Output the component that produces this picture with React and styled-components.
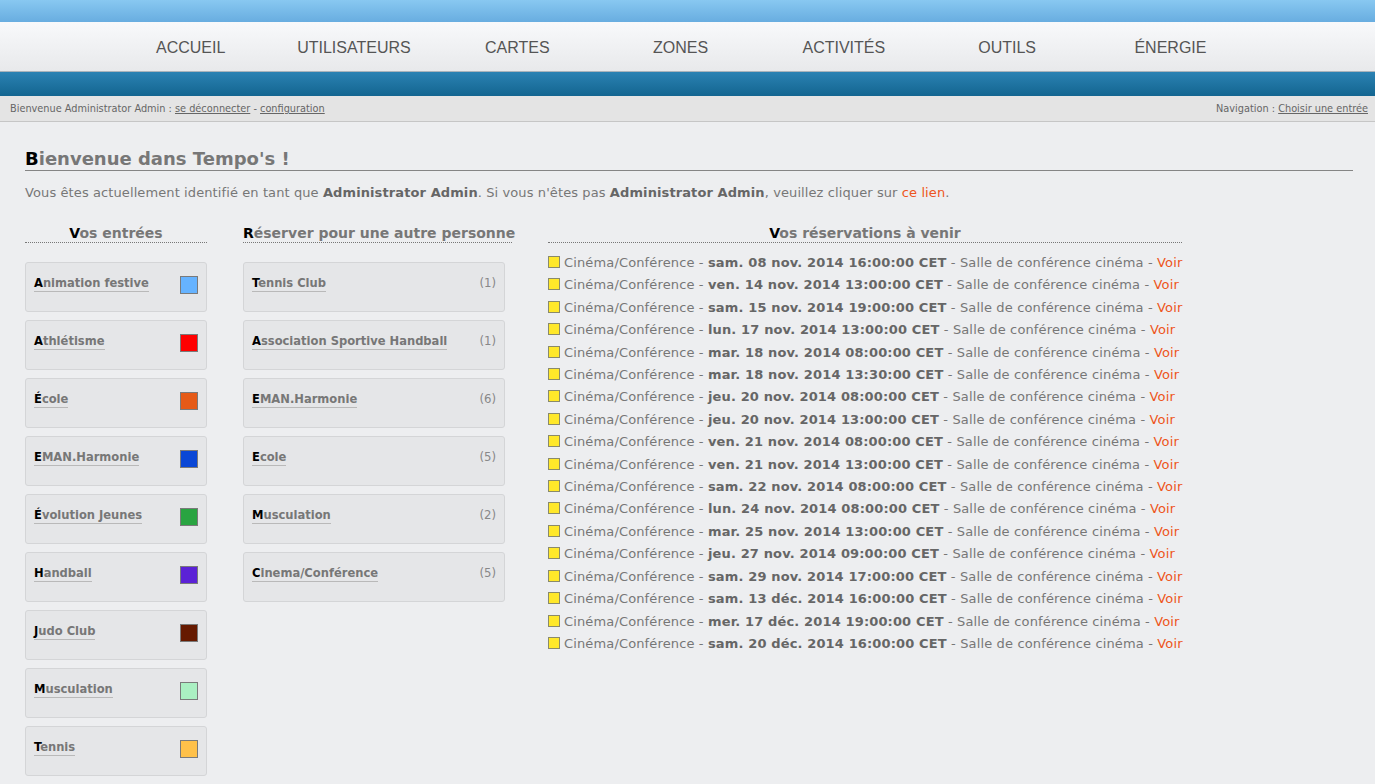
import React from "react";
import styled, { createGlobalStyle } from "styled-components";

const GlobalStyle = createGlobalStyle`
  html, body { margin: 0; padding: 0; }
  body {
    background: #edeef0;
    font-family: "DejaVu Sans", Verdana, sans-serif;
    color: #777;
  }
`;

const TopStrip = styled.div`
  height: 22px;
  background: linear-gradient(#88c8f1, #68ade0);
`;

const NavBar = styled.nav`
  height: 49px;
  background: linear-gradient(#f8f9fb, #e8e9eb);
  border-bottom: 1px solid #a9b3bb;
  display: flex;
  padding-left: 109px;
`;

const NavItem = styled.a`
  width: 163.3px;
  flex: none;
  display: flex;
  align-items: center;
  justify-content: center;
  padding-top: 2px;
  font-family: "Liberation Sans", Arial, sans-serif;
  font-size: 16px;
  color: #555;
  text-decoration: none;
`;

const BlueBar = styled.div`
  height: 24px;
  background: linear-gradient(#2b82b3, #136590);
`;

const InfoBar = styled.div`
  height: 25px;
  background: #e4e4e4;
  border-bottom: 1px solid #c6c6c6;
  display: flex;
  align-items: center;
  justify-content: space-between;
  padding: 0 7px 0 10px;
  font-family: "DejaVu Sans Condensed", "DejaVu Sans", sans-serif;
  font-size: 10.85px;
  color: #666;
`;

const SmallLink = styled.a`
  color: #666;
  text-decoration: underline;
`;

const Main = styled.main`
  padding: 25px 22px 20px 25px;
`;

const Title = styled.h1`
  margin: 0;
  font-size: 18px;
  font-weight: bold;
  color: #777;
  line-height: 23px;
  border-bottom: 1px solid #858585;
  &::first-letter { color: #000; }
`;

const Intro = styled.p`
  margin: 13px 0 0;
  font-size: 13px;
  letter-spacing: 0.1px;
  line-height: 18px;
  color: #777;
  b { color: #666; }
`;

const OrangeLink = styled.a`
  color: #ee5520;
  text-decoration: none;
`;

const Columns = styled.div`
  display: flex;
  gap: 36px;
  margin-top: 22px;
  align-items: flex-start;
`;

const Column = styled.section`
  width: ${(p) => p.$w}px;
  flex: none;
`;

const ColumnTitle = styled.h2`
  margin: 0;
  font-size: 14px;
  font-weight: bold;
  color: #777;
  text-align: center;
  white-space: nowrap;
  line-height: 18px;
  border-bottom: 1px dotted #777;
  &::first-letter { color: #000; }
`;

const CardList = styled.div`
  display: flex;
  flex-direction: column;
  gap: 8px;
  margin-top: 19px;
`;

const Card = styled.div`
  box-sizing: border-box;
  width: ${(p) => p.$w}px;
  height: 50px;
  background: #e5e6e8;
  border: 1px solid #d4d5d7;
  border-radius: 3px;
  display: flex;
  justify-content: space-between;
  align-items: flex-start;
  padding: 12px 8px 0 8px;
`;

const CardLabel = styled.a`
  font-family: "DejaVu Sans Condensed", "DejaVu Sans", sans-serif;
  font-size: 12.8px;
  font-weight: bold;
  color: #777;
  text-decoration: none;
  line-height: 16px;
  border-bottom: 1px solid #b9b9b9;
  &::first-letter { color: #000; }
`;

const Swatch = styled.span`
  box-sizing: border-box;
  width: 18px;
  height: 18px;
  margin-top: 1px;
  border: 1px solid #7a7a7a;
  background: ${(p) => p.$c};
`;

const Count = styled.span`
  font-family: "DejaVu Sans Condensed", "DejaVu Sans", sans-serif;
  font-size: 13px;
  color: #888;
  line-height: 16px;
`;

const ResList = styled.ul`
  list-style: none;
  margin: 9px 0 0;
  padding: 0;
`;

const ResRow = styled.li`
  font-size: 13px;
  letter-spacing: 0.14px;
  line-height: 22.4px;
  color: #777;
  white-space: nowrap;
  b { color: #666; }
`;

const YellowBox = styled.span`
  display: inline-block;
  box-sizing: border-box;
  width: 12px;
  height: 12px;
  background: #ffe82a;
  border: 1px solid #8a8a6a;
  margin-right: 4px;
  vertical-align: -1px;
`;

const Voir = styled.a`
  color: #ee5520;
  text-decoration: none;
`;

const navItems = ["ACCUEIL", "UTILISATEURS", "CARTES", "ZONES", "ACTIVITÉS", "OUTILS", "ÉNERGIE"];

const entries = [
  ["Animation festive", "#66b3ff"],
  ["Athlétisme", "#ff0000"],
  ["École", "#e55a17"],
  ["EMAN.Harmonie", "#0a47d6"],
  ["Évolution Jeunes", "#29a441"],
  ["Handball", "#5b22d6"],
  ["Judo Club", "#661a00"],
  ["Musculation", "#aaf0c2"],
  ["Tennis", "#ffc14a"],
];

const others = [
  ["Tennis Club", 1],
  ["Association Sportive Handball", 1],
  ["EMAN.Harmonie", 6],
  ["Ecole", 5],
  ["Musculation", 2],
  ["Cinema/Conférence", 5],
];

const reservations = [
  "sam. 08 nov. 2014 16:00:00 CET",
  "ven. 14 nov. 2014 13:00:00 CET",
  "sam. 15 nov. 2014 19:00:00 CET",
  "lun. 17 nov. 2014 13:00:00 CET",
  "mar. 18 nov. 2014 08:00:00 CET",
  "mar. 18 nov. 2014 13:30:00 CET",
  "jeu. 20 nov. 2014 08:00:00 CET",
  "jeu. 20 nov. 2014 13:00:00 CET",
  "ven. 21 nov. 2014 08:00:00 CET",
  "ven. 21 nov. 2014 13:00:00 CET",
  "sam. 22 nov. 2014 08:00:00 CET",
  "lun. 24 nov. 2014 08:00:00 CET",
  "mar. 25 nov. 2014 13:00:00 CET",
  "jeu. 27 nov. 2014 09:00:00 CET",
  "sam. 29 nov. 2014 17:00:00 CET",
  "sam. 13 déc. 2014 16:00:00 CET",
  "mer. 17 déc. 2014 19:00:00 CET",
  "sam. 20 déc. 2014 16:00:00 CET",
];

export default function App() {
  return (
    <>
      <GlobalStyle />
      <TopStrip />
      <NavBar>
        {navItems.map((n) => (
          <NavItem key={n} href="#">{n}</NavItem>
        ))}
      </NavBar>
      <BlueBar />
      <InfoBar>
        <span>
          Bienvenue Administrator Admin : <SmallLink href="#">se déconnecter</SmallLink> -{" "}
          <SmallLink href="#">configuration</SmallLink>
        </span>
        <span>
          Navigation : <SmallLink href="#">Choisir une entrée</SmallLink>
        </span>
      </InfoBar>
      <Main>
        <Title>Bienvenue dans Tempo's !</Title>
        <Intro>
          Vous êtes actuellement identifié en tant que <b>Administrator Admin</b>. Si vous n'êtes pas{" "}
          <b>Administrator Admin</b>, veuillez cliquer sur <OrangeLink href="#">ce lien</OrangeLink>.
        </Intro>
        <Columns>
          <Column $w={182}>
            <ColumnTitle>Vos entrées</ColumnTitle>
            <CardList>
              {entries.map(([name, color]) => (
                <Card key={name} $w={182}>
                  <CardLabel href="#">{name}</CardLabel>
                  <Swatch $c={color} />
                </Card>
              ))}
            </CardList>
          </Column>
          <Column $w={269}>
            <ColumnTitle>Réserver pour une autre personne</ColumnTitle>
            <CardList>
              {others.map(([name, n]) => (
                <Card key={name} $w={262}>
                  <CardLabel href="#">{name}</CardLabel>
                  <Count>({n})</Count>
                </Card>
              ))}
            </CardList>
          </Column>
          <Column $w={634}>
            <ColumnTitle>Vos réservations à venir</ColumnTitle>
            <ResList>
              {reservations.map((d, i) => (
                <ResRow key={i}>
                  <YellowBox />
                  Cinéma/Conférence - <b>{d}</b> - Salle de conférence cinéma -{" "}
                  <Voir href="#">Voir</Voir>
                </ResRow>
              ))}
            </ResList>
          </Column>
        </Columns>
      </Main>
    </>
  );
}
